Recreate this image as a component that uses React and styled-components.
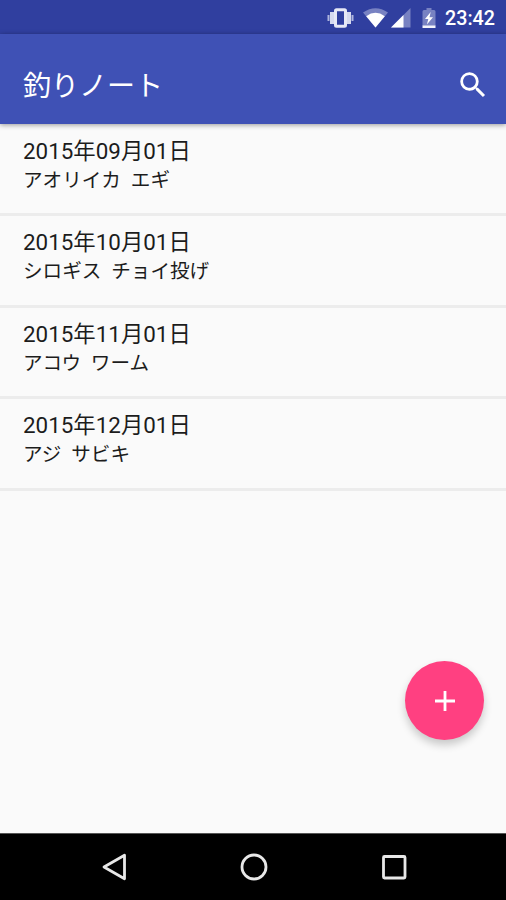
import React from "react";
import styled, { createGlobalStyle } from "styled-components";

const GlobalStyle = createGlobalStyle`
  body {
    margin: 0;
    font-family: Roboto, "Noto Sans CJK JP", sans-serif;
  }
`;

const Screen = styled.div`
  display: flex;
  flex-direction: column;
  position: relative;
  width: 100%;
  height: 900px;
  overflow: hidden;
  background-color: #fafafa;
`;

const StatusBar = styled.div`
  display: flex;
  align-items: center;
  justify-content: flex-end;
  box-sizing: border-box;
  height: 34px;
  flex: none;
  padding: 2px 11px 0 0;
  background-color: #303f9f;
  color: #ffffff;

  svg {
    display: block;
    flex: none;
  }
`;

const StatusIcon = styled.svg`
  margin-right: ${(props) => props.$gap}px;
`;

const Clock = styled.span`
  padding-top: 1px;
  font-size: 19.7px;
  line-height: 24px;
  font-weight: 500;
`;

const Toolbar = styled.header`
  display: flex;
  align-items: center;
  justify-content: space-between;
  box-sizing: border-box;
  height: 90px;
  flex: none;
  padding: 12px 16px 0 23px;
  background-color: #3f51b5;
  box-shadow: 0 1px 5px rgba(0, 0, 0, 0.4);
  z-index: 1;

  h1 {
    margin: 0;
    padding-top: 3px;
    font-size: 28px;
    line-height: 36px;
    font-weight: 400;
    color: #ffffff;
  }
`;

const IconButton = styled.button`
  display: flex;
  padding: 0;
  border: none;
  background: none;
  color: #ffffff;
  cursor: pointer;
`;

const NoteList = styled.ul`
  flex: 1;
  margin: 0;
  padding: 1px 0 0;
  list-style: none;
`;

const NoteRow = styled.li`
  box-sizing: border-box;
  height: 91.4px;
  padding: 12px 23px 0;
  border-bottom: 3px solid #ececec;
`;

const NoteDate = styled.div`
  font-size: 22.4px;
  line-height: 28px;
  color: #1c1c1c;
`;

const NoteTitle = styled.div`
  padding-top: 1px;
  font-size: 19.6px;
  line-height: 29px;
  word-spacing: 5px;
  color: #1c1c1c;
`;

const AddButton = styled.button`
  position: absolute;
  right: 22px;
  bottom: 160px;
  display: flex;
  align-items: center;
  justify-content: center;
  width: 79px;
  height: 79px;
  padding: 0;
  border: none;
  border-radius: 50%;
  background-color: #ff4081;
  box-shadow: 0 5px 9px rgba(0, 0, 0, 0.2);
  cursor: pointer;
`;

const NavBar = styled.nav`
  display: flex;
  align-items: center;
  justify-content: center;
  gap: 112px;
  box-sizing: border-box;
  height: 67px;
  flex: none;
  padding-left: 1px;
  border-top: 1px solid #555555;
  background-color: #000000;

  svg {
    display: block;
  }
`;

const notes = [
  { date: "2015年09月01日", title: "アオリイカ エギ" },
  { date: "2015年10月01日", title: "シロギス チョイ投げ" },
  { date: "2015年11月01日", title: "アコウ ワーム" },
  { date: "2015年12月01日", title: "アジ サビキ" },
];

function StatusIcons() {
  return (
    <>
      {/* vibrate */}
      <StatusIcon $gap={9} width="27" height="20" viewBox="0 0 27 20">
        <path d="M.5 7h2v6h-2zM24.500 7h2v6h-2z" fill="#aeb5dd" />
        <path d="M3 4h4v12H3zM20 4h4v12h-4z" fill="#d5d9ef" />
        <rect
          x="8.500"
          y="1.800"
          width="10"
          height="16.400"
          rx="1"
          fill="none"
          stroke="#e6e8f6"
          strokeWidth="3"
        />
      </StatusIcon>
      {/* wifi */}
      <StatusIcon $gap={3} width="25" height="20" viewBox="0 0 25 20">
        <path d="M0 4.500Q12.500-4 25 4.500L12.500 19.500Z" fill="#7882c2" />
        <path d="M3.200 8.200Q12.500 1.500 21.800 8.200L12.500 19.500Z" fill="#ffffff" />
      </StatusIcon>
      {/* mobile signal */}
      <StatusIcon $gap={11} width="20" height="20" viewBox="0 0 20 20">
        <path d="M0 19.500L19.500 0v19.500z" fill="#7882c2" />
        <path d="M0 19.500L12.500 7v12.500z" fill="#ffffff" />
      </StatusIcon>
      {/* battery */}
      <StatusIcon $gap={9} width="14" height="21" viewBox="0 0 14 21">
        <path
          d="M4.500 0h5v2H12q1.500 0 1.500 1.500V18H.5V3.500Q.5 2 2 2h2.500z"
          fill="#7882c2"
        />
        <path d="M.5 17.500h13V20H.5z" fill="#f3f4fb" />
        <path d="M8.700 4L3 11h3.300l-1.400 5.500L11 9.200H7.500z" fill="#ffffff" />
      </StatusIcon>
    </>
  );
}

function App() {
  return (
    <Screen>
      <GlobalStyle />
      <StatusBar>
        <StatusIcons />
        <Clock>23:42</Clock>
      </StatusBar>

      <Toolbar>
        <h1>釣りノート</h1>
        <IconButton aria-label="検索">
          <svg width="34" height="34" viewBox="0 0 24 24" fill="currentColor">
            <path d="M15.500 14h-.790l-.280-.270A6.471 6.471 0 0 0 16 9.500 6.500 6.500 0 1 0 9.500 16c1.610 0 3.090-.590 4.230-1.570l.270.280v.790l5 4.990L20.490 19l-4.990-5zm-6 0C7.010 14 5 11.990 5 9.500S7.010 5 9.500 5 14 7.010 14 9.500 11.990 14 9.500 14z" />
          </svg>
        </IconButton>
      </Toolbar>

      <NoteList>
        {notes.map((note) => (
          <NoteRow key={note.date}>
            <NoteDate>{note.date}</NoteDate>
            <NoteTitle>{note.title}</NoteTitle>
          </NoteRow>
        ))}
      </NoteList>

      <AddButton aria-label="追加">
        <svg width="20" height="20" viewBox="0 0 20 20">
          <path d="M10 0v20M0 10h20" stroke="#ffffff" strokeWidth="2.800" />
        </svg>
      </AddButton>

      <NavBar>
        <svg width="28" height="28" viewBox="0 0 28 28">
          <path
            d="M4 14L24.500 2.200v23.600z"
            fill="none"
            stroke="#e8e8e8"
            strokeWidth="2.800"
            strokeLinejoin="round"
          />
        </svg>
        <svg width="28" height="28" viewBox="0 0 28 28">
          <circle
            cx="14"
            cy="14"
            r="12"
            fill="none"
            stroke="#e8e8e8"
            strokeWidth="2.800"
          />
        </svg>
        <svg width="28" height="28" viewBox="0 0 28 28">
          <rect
            x="3.500"
            y="3.500"
            width="21.500"
            height="21.500"
            rx="1"
            fill="none"
            stroke="#e8e8e8"
            strokeWidth="2.800"
          />
        </svg>
      </NavBar>
    </Screen>
  );
}

export default App;
